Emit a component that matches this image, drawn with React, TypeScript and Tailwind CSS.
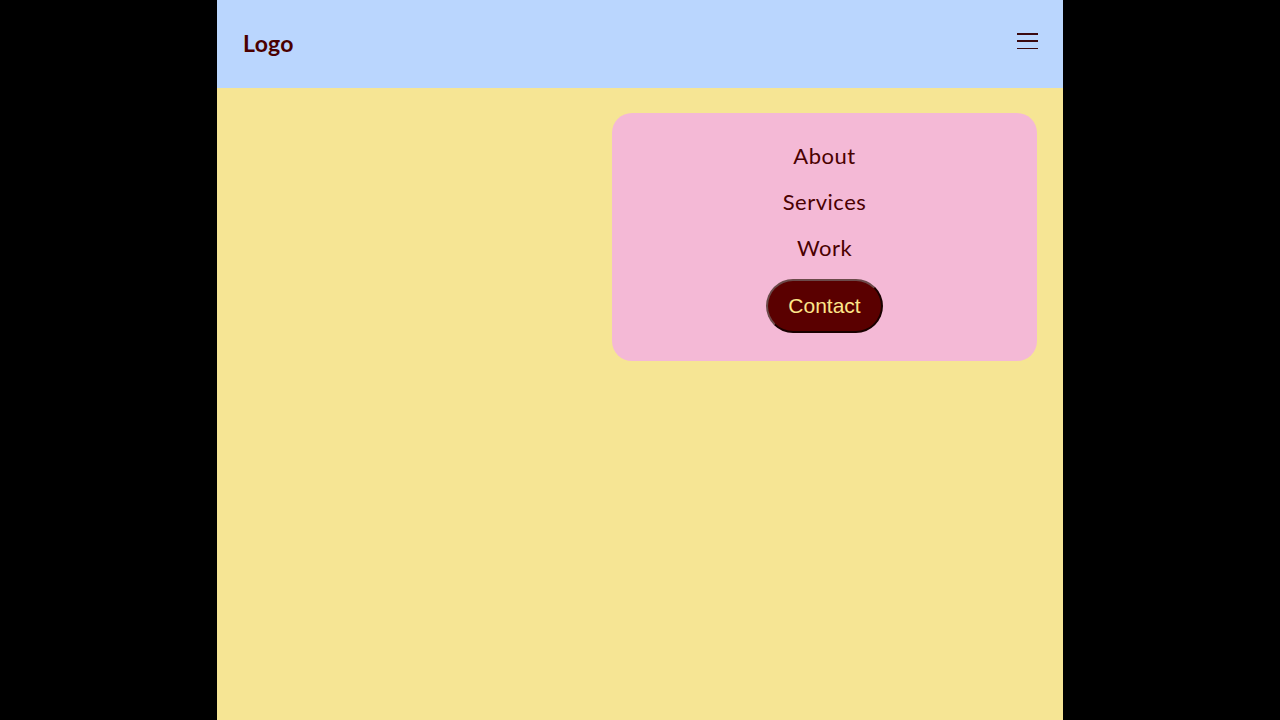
export default function App() {
  const links = ["About", "Services", "Work"];
  return (
    <div className="min-h-screen w-full bg-black">
      <div className="mx-auto flex h-[720px] w-[846px] flex-col bg-[#f6e594]">
        <header className="flex h-[88px] items-center justify-between bg-[#bad6fe] px-6">
          <span className="mb-[2px] pl-[2px] font-['Lato',sans-serif] text-[23px] font-bold tracking-[0.3px] text-[#4a0000]">
            Logo
          </span>
          <button className="mb-[6px] mr-[1px] flex h-[18px] w-[21px] flex-col justify-between py-[1px]">
            <span className="h-[1.5px] w-full bg-[#3b0a10]" />
            <span className="h-[1.5px] w-full bg-[#3b0a10]" />
            <span className="h-[1.5px] w-full bg-[#3b0a10]" />
          </button>
        </header>
        <div className="flex justify-end px-[26px] pt-[25px]">
          <nav className="flex w-[425px] flex-col items-center gap-4 rounded-[20px] bg-[#f4b9d6] py-7">
            {links.map((l) => (
              <a
                key={l}
                className="font-['Lato',sans-serif] text-[22px] leading-[30px] tracking-[0.5px] text-[#4a0000]"
              >
                {l}
              </a>
            ))}
            <button className="h-[54px] w-[117px] rounded-full border-2 border-solid border-[#6b4a4a] border-r-[#1a0000] border-b-[#1a0000] bg-[#5a0000] font-['Liberation_Sans',sans-serif] text-[21px] text-[#fde68a]">
              Contact
            </button>
          </nav>
        </div>
      </div>
    </div>
  );
}
